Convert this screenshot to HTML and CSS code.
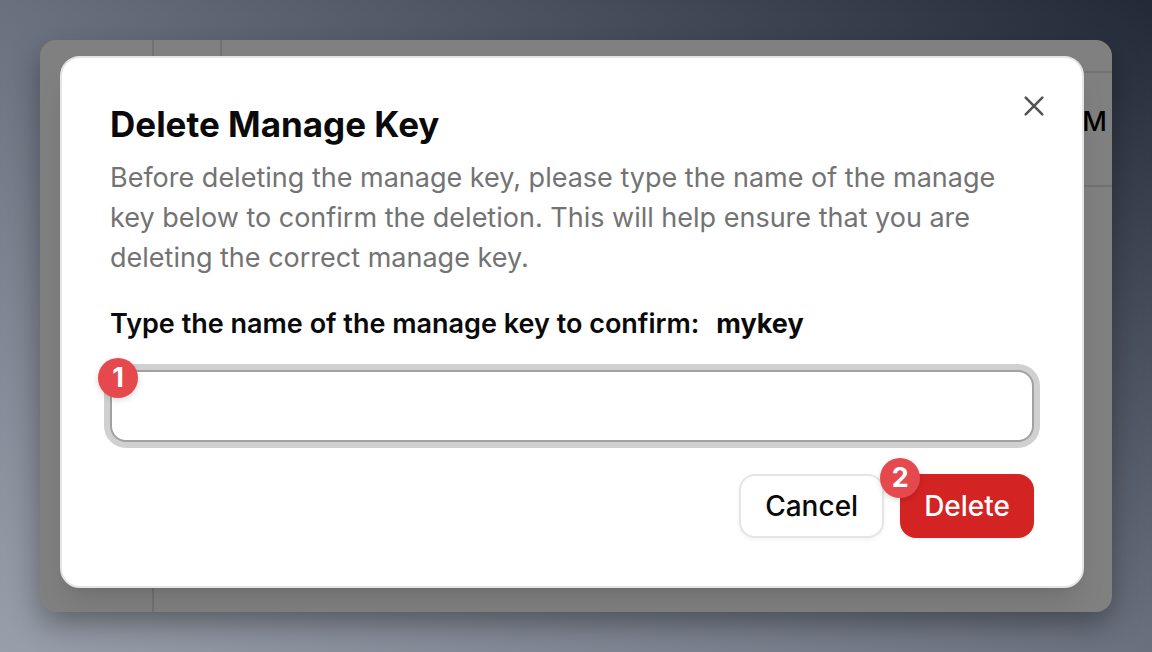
FILE: index.html
```html
<!DOCTYPE html>
<html lang="en">
    <head>
        <title>Delete Manage Key</title>
        <meta charset="UTF-8">
        <meta name="viewport" content="width=device-width, initial-scale=1">
        <link rel="stylesheet" href="styles.css">
    </head>
    <body>
        <div class="window">
            <div class="page" aria-hidden="true">
                <div class="sidebar"></div>
                <div class="content">
                    <div class="topbar"><span class="toggle"></span></div>
                    <div class="row">M</div>
                </div>
            </div>
            <form class="dialog" role="dialog" aria-labelledby="dialog-title" aria-describedby="dialog-text">
                <button type="button" class="close" aria-label="Close">
                    <svg viewBox="0 0 32 32" width="32" height="32" fill="none" stroke="currentColor" stroke-width="2.6" stroke-linecap="round">
                        <path d="M7.7 7.7L24.3 24.3M24.3 7.7L7.7 24.3"/>
                    </svg>
                </button>
                <header class="dialog-header">
                    <h1 id="dialog-title">Delete Manage Key</h1>
                    <p id="dialog-text">Before deleting the manage key, please type the name of the manage key below to confirm the deletion. This will help ensure that you are deleting the correct manage key.</p>
                </header>
                <label class="confirm-label" for="key-name">Type the name of the manage key to confirm: <b>mykey</b></label>
                <div class="field">
                    <input type="text" id="key-name" class="key-input" autocomplete="off">
                    <span class="badge">1</span>
                </div>
                <footer class="dialog-footer">
                    <button type="button" class="btn btn-cancel">Cancel</button>
                    <div class="field">
                        <button type="submit" class="btn btn-delete">Delete</button>
                        <span class="badge badge-corner">2</span>
                    </div>
                </footer>
            </form>
        </div>
    </body>
</html>
```

FILE: styles.css
```css
* {
    margin: 0;
    padding: 0;
    box-sizing: border-box;
}
body {
    min-height: 100vh;
    padding: 40px;
    font-family: Inter, "Liberation Sans", sans-serif;
    font-size: 27px;
    color: #0a0a0a;
    background: linear-gradient(to bottom left, #222a38, #6a717e, #989eaa);
}
.window {
    position: relative;
    padding: 16px 28px 24px 20px;
    border-radius: 16px;
    background-color: #808080;
    box-shadow: 0 12px 30px rgba(0, 0, 0, 0.35);
}

/* page dimmed behind the dialog */
.page {
    position: absolute;
    inset: 0;
    display: flex;
    overflow: hidden;
    border-radius: 16px;
}
.sidebar {
    width: 114px;
    border-right: 2px solid #727272;
}
.content {
    flex: 1;
}
.topbar {
    display: flex;
    height: 33px;
    border-bottom: 2px solid #727272;
}
.toggle {
    width: 68px;
    border-right: 2px solid #727272;
}
.row {
    display: flex;
    align-items: center;
    justify-content: flex-end;
    height: 114px;
    padding: 0 5px 16px 0;
    border-bottom: 2px solid #727272;
    font-weight: 500;
    color: #000000;
}

.dialog {
    position: relative;
    display: flex;
    flex-direction: column;
    gap: 32px;
    padding: 48px;
    border: 2px solid #e5e5e5;
    border-radius: 20px;
    background-color: #ffffff;
    box-shadow: 0 20px 30px -6px rgba(0, 0, 0, 0.1), 0 8px 12px -8px rgba(0, 0, 0, 0.1);
}
.dialog-header {
    display: flex;
    flex-direction: column;
    gap: 16px;
}
.dialog-header h1 {
    font-size: 35px;
    font-weight: 700;
    line-height: 36px;
}
.dialog-header p {
    line-height: 40px;
    color: #737373;
}
.close {
    position: absolute;
    top: 32px;
    right: 32px;
    width: 32px;
    height: 32px;
    border: none;
    background: none;
    color: #545454;
    cursor: pointer;
}
.close svg {
    display: block;
}
.confirm-label {
    font-weight: 600;
    line-height: 28px;
}
.confirm-label b {
    margin-left: 10px;
    font-weight: 700;
}
.field {
    position: relative;
}
.key-input {
    display: block;
    width: 100%;
    height: 72px;
    padding: 8px 24px;
    border: 2px solid #a1a1a1;
    border-radius: 16px;
    outline: none;
    font: inherit;
    background-color: #ffffff;
    box-shadow: 0 0 0 6px #d0d0d0;
}
.dialog-footer {
    display: flex;
    justify-content: flex-end;
    gap: 16px;
}
.btn {
    height: 64px;
    padding: 0 24px;
    border: none;
    border-radius: 16px;
    font: inherit;
    font-size: 28px;
    font-weight: 500;
    cursor: pointer;
}
.btn-cancel {
    border: 2px solid #e5e5e5;
    color: #0a0a0a;
    background-color: #ffffff;
    box-shadow: 0 2px 4px rgba(0, 0, 0, 0.05);
}
.btn-delete {
    color: #ffffff;
    background-color: #d42323;
    box-shadow: 0 2px 4px rgba(0, 0, 0, 0.05);
}
.badge {
    position: absolute;
    top: -12px;
    left: -12px;
    width: 40px;
    height: 40px;
    border-radius: 50%;
    font-weight: 700;
    line-height: 40px;
    text-align: center;
    color: #ffffff;
    background-color: #e5484d;
    box-shadow: 0 2px 6px rgba(0, 0, 0, 0.15);
}
.badge-corner {
    top: -16px;
    left: -20px;
}
```
